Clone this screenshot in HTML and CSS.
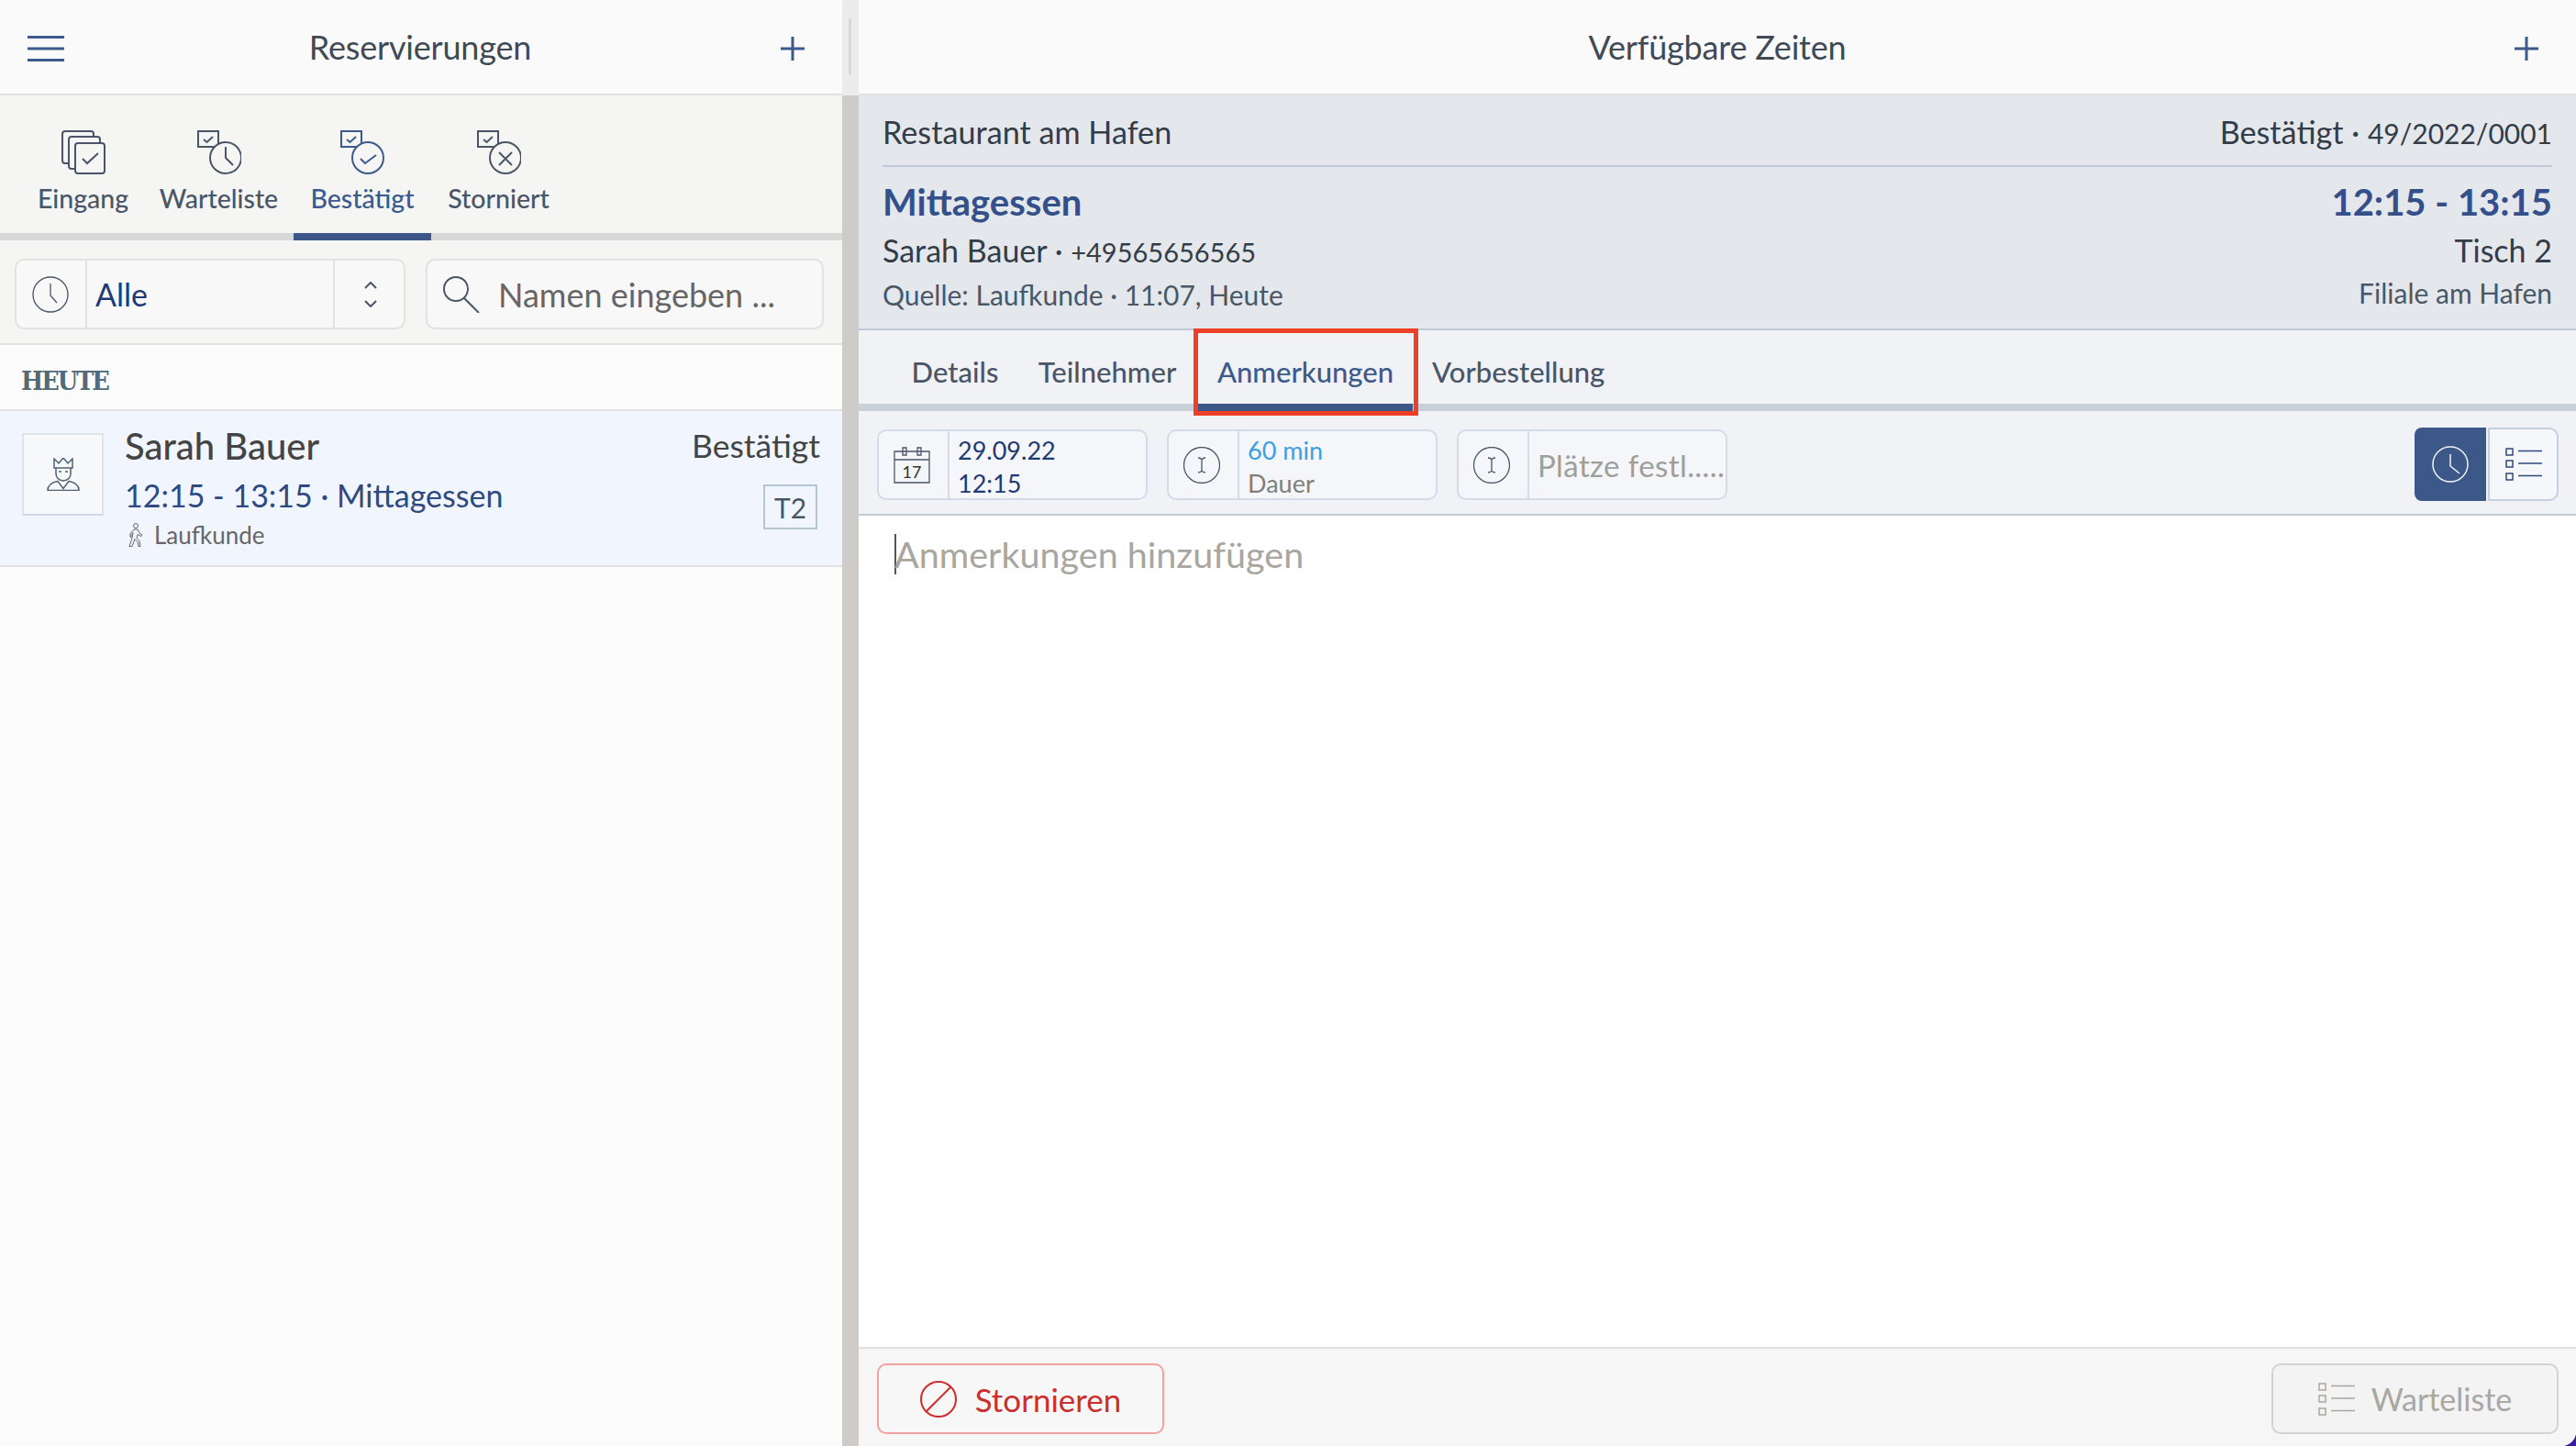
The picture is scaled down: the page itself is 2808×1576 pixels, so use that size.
FILE: index.html
```html
<!DOCTYPE html>
<html lang="de">
<head>
  <meta charset="UTF-8">
  <title>Reservierungen</title>
  <link rel="stylesheet" href="styles.css">
</head>
<body>
  <div class="app">
    <div class="left">
      <div class="topbar">
        <svg class="burger" viewBox="0 0 40 28" width="40" height="28"><path d="M0 1.5h40M0 14h40M0 26.500h40"/></svg>
        <span class="topbar-title title-left">Reservierungen</span>
        <svg class="plus" viewBox="0 0 26 26" width="26" height="26"><path d="M13 0v26M0 13h26"/></svg>
      </div>
      <div class="status-tabs">
        <div class="status-tab">
          <svg class="status-icon" viewBox="0 0 48 48" width="48" height="48">
            <rect x="1" y="1" width="34" height="35" rx="3"/>
            <rect x="8" y="7" width="34" height="35" rx="3"/>
            <rect x="15" y="14" width="32" height="33" rx="3"/>
            <path d="M23 31l5 5 12-11"/>
          </svg>
          <span>Eingang</span>
        </div>
        <div class="status-tab">
          <svg class="status-icon" viewBox="0 0 48 48" width="48" height="48">
            <rect x="1" y="1" width="22" height="17"/>
            <path d="M7 10l3.500 3 6.500-6"/>
            <circle cx="31" cy="30" r="17"/>
            <path d="M31 18v12l8 8"/>
          </svg>
          <span>Warteliste</span>
        </div>
        <div class="status-tab active">
          <svg class="status-icon" viewBox="0 0 48 48" width="48" height="48">
            <rect x="1" y="1" width="22" height="17"/>
            <path d="M7 10l3.500 3 6.500-6"/>
            <circle cx="30" cy="30" r="17"/>
            <path d="M22 31l5 5 12-9"/>
          </svg>
          <span>Bestätigt</span>
        </div>
        <div class="status-tab">
          <svg class="status-icon" viewBox="0 0 48 48" width="48" height="48">
            <rect x="1" y="1" width="22" height="17"/>
            <path d="M7 10l3.500 3 6.500-6"/>
            <circle cx="31" cy="30" r="17"/>
            <path d="M24 24l14 14M38 24l-14 14"/>
          </svg>
          <span>Storniert</span>
        </div>
      </div>
      <div class="filters">
        <div class="select-box">
          <div class="select-icon">
            <svg class="thin-icon" viewBox="0 0 40 40" width="40" height="40"><circle cx="20" cy="20" r="19"/><path d="M20 8v13l7 8"/></svg>
          </div>
          <div class="select-value">Alle</div>
          <div class="select-arrows">
            <svg class="line-icon" viewBox="0 0 14 28" width="14" height="28"><path d="M1 7l6-6 6 6M1 21l6 6 6-6"/></svg>
          </div>
        </div>
        <div class="search-box">
          <svg class="line-icon" viewBox="0 0 40 40" width="40" height="40"><circle cx="14" cy="14" r="13"/><path d="M23 24l16 16"/></svg>
          <span>Namen eingeben ...</span>
        </div>
      </div>
      <div class="list">
        <div class="list-heading">HEUTE</div>
        <div class="res-row">
          <div class="avatar">
            <svg class="avatar-icon" viewBox="0 0 36 36" width="36" height="36">
              <path d="M8 11V1l5 5 5-6 5 6 5-5v10z"/>
              <path d="M10 11v6q0 7 8 8 8-1 8-8v-6"/>
              <path d="M13 15h3M20 15h3"/>
              <path d="M1 35.500q0-8 11-10l6 8 6-8q11 2 11 10z"/>
            </svg>
          </div>
          <div class="res-main">
            <div class="res-name">Sarah Bauer</div>
            <div class="res-time">12:15 - 13:15 · Mittagessen</div>
            <div class="res-source">
              <svg class="walker" viewBox="0 0 17 26" width="17" height="26">
                <circle cx="9" cy="3" r="2.500"/>
                <path d="M7 7h4l2 4 3 2-1 1.500-4-2-1 4 3 3 1 6h-2l-1-5-3-3-3 8H2l3-9 1-6-2 2v3H3v-4z"/>
              </svg>
              <span>Laufkunde</span>
            </div>
          </div>
          <div class="res-side">
            <div class="res-status">Bestätigt</div>
            <div class="table-badge">T2</div>
          </div>
        </div>
      </div>
    </div>

    <div class="splitter"><div class="splitter-top"><i></i></div></div>

    <div class="right">
      <div class="topbar">
        <span class="topbar-spacer"></span>
        <span class="topbar-title">Verfügbare Zeiten</span>
        <svg class="plus" viewBox="0 0 26 26" width="26" height="26"><path d="M13 0v26M0 13h26"/></svg>
      </div>
      <div class="info">
        <div class="info-top">
          <span>Restaurant am Hafen</span>
          <span>Bestätigt · <small>49/2022/0001</small></span>
        </div>
        <div class="info-rows">
          <div class="info-col">
            <div class="info-big">Mittagessen</div>
            <div class="info-mid">Sarah Bauer · <small>+49565656565</small></div>
            <div class="info-small">Quelle: Laufkunde · 11:07, Heute</div>
          </div>
          <div class="info-col info-col-right">
            <div class="info-big">12:15 - 13:15</div>
            <div class="info-mid">Tisch 2</div>
            <div class="info-small">Filiale am Hafen</div>
          </div>
        </div>
      </div>
      <div class="detail-tabs">
        <div class="detail-tab">Details</div>
        <div class="detail-tab">Teilnehmer</div>
        <div class="detail-tab active">Anmerkungen<div class="highlight"></div></div>
        <div class="detail-tab tab-order">Vorbestellung</div>
      </div>
      <div class="toolbar">
        <div class="field">
          <div class="field-icon">
            <svg class="thin-icon" viewBox="0 0 40 40" width="40" height="40">
              <path d="M1 5h38v34H1zM1 14h38M10 1h4v8h-4zM26 1h4v8h-4z"/>
              <text x="20" y="34" text-anchor="middle" class="cal-day">17</text>
            </svg>
          </div>
          <div class="field-text"><div class="dark-blue">29.09.22</div><div class="dark-blue">12:15</div></div>
        </div>
        <div class="field">
          <div class="field-icon">
            <svg class="thin-icon" viewBox="0 0 40 40" width="40" height="40"><circle cx="20" cy="20" r="19.500"/><path d="M16 12q3 0 4 2 1-2 4-2M20 14v12M16 28q3 0 4-2 1 2 4 2"/></svg>
          </div>
          <div class="field-text"><div class="sky">60 min</div><div class="muted">Dauer</div></div>
        </div>
        <div class="field">
          <div class="field-icon">
            <svg class="thin-icon" viewBox="0 0 40 40" width="40" height="40"><circle cx="20" cy="20" r="19.500"/><path d="M16 12q3 0 4 2 1-2 4-2M20 14v12M16 28q3 0 4-2 1 2 4 2"/></svg>
          </div>
          <div class="field-placeholder">Plätze festl.....</div>
        </div>
        <div class="view-switch">
          <div class="view-btn view-on">
            <svg class="white-icon" viewBox="0 0 40 40" width="40" height="40"><circle cx="20" cy="20" r="19"/><path d="M20 9v13l10 8"/></svg>
          </div>
          <div class="view-btn view-off">
            <svg class="list-icon" viewBox="0 0 40 36" width="40" height="36"><path d="M1 1h7v7H1zM1 14h7v7H1zM1 28h7v7H1zM14 3.500h26M14 17h26M14 30.500h26"/></svg>
          </div>
        </div>
      </div>
      <div class="notes"><span class="caret"></span><span class="notes-hint">Anmerkungen hinzufügen</span></div>
      <div class="footer">
        <button class="btn btn-cancel">
          <svg class="cancel-icon" viewBox="0 0 40 40" width="40" height="40"><circle cx="20" cy="20" r="19"/><path d="M7 33L33 7"/></svg>
          Stornieren
        </button>
        <button class="btn btn-wait">
          <svg class="list-icon grey" viewBox="0 0 40 36" width="40" height="36"><path d="M1 1h7v7H1zM1 14h7v7H1zM1 28h7v7H1zM14 3.500h26M14 17h26M14 30.500h26"/></svg>
          Warteliste
        </button>
      </div>
    </div>
  </div>
</body>
</html>
```
FILE: styles.css
```css
* {
  box-sizing: border-box;
}
html, body {
  margin: 0;
  height: 100%;
}
body {
  background-color: #3a1c9c;
  font-family: Lato, "Noto Sans", sans-serif;
  color: #333;
}
.app {
  display: flex;
  width: 2808px;
  height: 1576px;
  border-bottom-right-radius: 16px;
  overflow: hidden;
  background-color: #fbfbfb;
}
.left {
  width: 918px;
  display: flex;
  flex-direction: column;
  background-color: #fbfbfb;
}
.splitter {
  width: 18px;
  background-color: #cdccc9;
}
.splitter-top {
  height: 104px;
  background-color: #ececec;
  padding: 20px 0 0 7px;
}
.splitter-top i {
  display: block;
  width: 3px;
  height: 62px;
  background-color: #d8d8d8;
}
.right {
  flex: 1;
  display: flex;
  flex-direction: column;
  background-color: #fff;
}

/* top bars */
.topbar {
  height: 104px;
  flex: none;
  display: flex;
  align-items: center;
  justify-content: space-between;
  padding: 4px 41px 0 30px;
  background-color: #fafafa;
  border-bottom: 2px solid #e2e2e2;
}
.topbar-title {
  font-size: 36px;
  letter-spacing: -0.2px;
  margin-top: -4px;
  color: #3f4a56;
}
.title-left {
  margin-right: 5px;
}
.topbar-spacer {
  width: 37px;
}
.burger, .plus {
  fill: none;
  stroke: #3c5a8c;
  stroke-width: 3;
}

/* status tabs */
.status-tabs {
  height: 158px;
  flex: none;
  display: grid;
  grid-template-columns: 133px 163px 150px 147px;
  padding-left: 24px;
  background-color: #f5f5f3;
  border-bottom: 8px solid #d8d8d8;
}
.status-tab {
  display: flex;
  flex-direction: column;
  align-items: center;
  padding-top: 38px;
  height: 158px;
  font-size: 28.500px;
  font-weight: 500;
  color: #4a5668;
}
.status-tab span {
  margin-top: 6px;
  line-height: 40px;
}
.status-tab.active {
  color: #3c5a8c;
  border-bottom: 8px solid #3c5688;
}
.status-icon {
  fill: #f5f5f3;
  stroke: #4a5668;
  stroke-width: 2;
}
.active .status-icon {
  stroke: #3c5a8c;
}

/* filters */
.filters {
  height: 114px;
  flex: none;
  display: flex;
  gap: 22px;
  padding: 20px 20px 0 16px;
  background-color: #f5f5f3;
  border-bottom: 2px solid #e2e2e2;
}
.select-box, .search-box {
  height: 77px;
  display: flex;
  align-items: center;
  background-color: #f8f8f8;
  border: 2px solid #e2e2e2;
  border-radius: 10px;
}
.select-box {
  width: 426px;
}
.search-box {
  width: 434px;
  padding-left: 17px;
  gap: 20px;
  font-size: 36px;
  color: #666;
}
.select-icon {
  width: 77px;
  height: 100%;
  padding-right: 2px;
  display: flex;
  align-items: center;
  justify-content: center;
  border-right: 2px solid #e2e2e2;
}
.select-value {
  width: 270px;
  height: 100%;
  display: flex;
  align-items: center;
  padding-left: 9px;
  font-size: 34px;
  color: #1f3a75;
  border-right: 2px solid #e2e2e2;
}
.select-arrows {
  flex: 1;
  display: flex;
  justify-content: center;
  padding-left: 2px;
}
.line-icon {
  fill: none;
  stroke: #4a5668;
  stroke-width: 2;
}
.thin-icon {
  fill: none;
  stroke: #4a5668;
  stroke-width: 1.300;
}
.cal-day {
  font-size: 18px;
  fill: #333;
  stroke: none;
}

/* list */
.list-heading {
  height: 72px;
  display: flex;
  align-items: center;
  padding: 7px 0 0 23px;
  font-family: "DejaVu Serif Condensed", "DejaVu Serif", serif;
  font-weight: bold;
  font-size: 28.500px;
  letter-spacing: -2px;
  color: #4f6a7a;
  border-bottom: 2px solid #e2e2e2;
}
.res-row {
  height: 170px;
  display: flex;
  padding: 24px 27px 0 24px;
  background-color: #f1f6fe;
  border-bottom: 2px solid #e2e2e2;
}
.avatar {
  width: 89px;
  height: 90px;
  display: flex;
  align-items: center;
  justify-content: center;
  background-color: #f7f8fa;
  border: 2px solid #dfe4ea;
  border-bottom-color: #cfd8e4;
}
.avatar-icon {
  fill: none;
  stroke: #4f6274;
  stroke-width: 1.500;
}
.res-main {
  flex: 1;
  padding-left: 23px;
}
.res-name {
  font-size: 40px;
  font-weight: 500;
  line-height: 44px;
  margin-top: -8px;
  color: #444;
}
.res-time {
  font-size: 34px;
  line-height: 44px;
  margin-top: 10px;
  color: #2e4a80;
}
.res-source {
  display: flex;
  align-items: center;
  gap: 12px;
  margin-top: 6px;
  padding-left: 3px;
  font-size: 26px;
  line-height: 30px;
  color: #666;
}
.walker {
  fill: none;
  stroke: #666;
  stroke-width: 1;
}
.res-side {
  display: flex;
  flex-direction: column;
  align-items: flex-end;
}
.res-status {
  font-size: 35.500px;
  line-height: 44px;
  margin: -8px -3px 0 0;
  color: #444;
}
.table-badge {
  width: 59px;
  height: 49px;
  margin-top: 20px;
  display: flex;
  align-items: center;
  justify-content: center;
  font-size: 30px;
  color: #4a5668;
  border: 2px solid #b4c6d6;
}

/* reservation info */
.info {
  height: 256px;
  flex: none;
  padding: 0 26px 0 26px;
  background-color: #e4e7ec;
  border-bottom: 2px solid #bcc8d8;
}
.info-top {
  height: 78px;
  display: flex;
  justify-content: space-between;
  align-items: center;
  padding-top: 2px;
  font-size: 34.200px;
  color: #333d47;
  border-bottom: 2px solid #c0c8d8;
}
.info small {
  font-size: 30px;
}
.info-rows {
  display: flex;
  justify-content: space-between;
}
.info-col-right {
  text-align: right;
}
.info-big {
  font-size: 40px;
  font-weight: 700;
  line-height: 56px;
  margin-top: 10px;
  color: #34508a;
}
.info-mid {
  font-size: 34px;
  line-height: 46px;
  margin-top: 2px;
  color: #333d47;
}
.info-mid small {
  font-size: 29px;
}
.info-small {
  font-size: 30px;
  line-height: 46px;
  color: #4a5866;
}

/* detail tabs */
.detail-tabs {
  height: 88px;
  flex: none;
  position: relative;
  padding-left: 38px;
  background-color: #f0f2f6;
  border-bottom: 8px solid #c8d0da;
  display: grid;
  grid-template-columns: 134px 198px 234px auto;
  font-size: 31px;
  font-weight: 500;
  color: #4a5668;
}
.detail-tab {
  height: 88px;
  padding-top: 23px;
  line-height: 44px;
  text-align: center;
  position: relative;
}
.tab-order {
  text-align: left;
  padding-left: 21px;
}
.detail-tab.active {
  color: #3c5a8c;
  border-bottom: 8px solid #3c5688;
}
.highlight {
  position: absolute;
  top: -2px;
  left: -5px;
  right: -6px;
  bottom: -13px;
  border: 5px solid #ee4026;
}

/* toolbar */
.toolbar {
  height: 114px;
  flex: none;
  display: flex;
  gap: 21px;
  padding: 20px 19px 0 20px;
  background-color: #f0f2f6;
  border-bottom: 2px solid #c0ccd8;
}
.field {
  width: 295px;
  height: 77px;
  display: flex;
  background-color: #f4f6f9;
  border: 2px solid #d4dbe6;
  border-radius: 10px;
}
.field-icon {
  width: 77px;
  flex: none;
  padding-right: 4px;
  display: flex;
  align-items: center;
  justify-content: center;
  border-right: 2px solid #d4dbe6;
}
.field-text {
  padding: 3px 0 0 9px;
  font-size: 27px;
  line-height: 36px;
}
.dark-blue {
  color: #1f3a75;
}
.sky {
  color: #3d9fe0;
}
.muted {
  color: #80807a;
}
.field-placeholder {
  display: flex;
  align-items: center;
  padding-left: 9px;
  font-size: 33px;
  letter-spacing: 0.4px;
  white-space: nowrap;
  color: #a09e98;
}
.view-switch {
  margin-left: auto;
  display: flex;
  gap: 2px;
  height: 80px;
  margin-top: -2px;
}
.view-btn {
  width: 78px;
  display: flex;
  align-items: center;
  justify-content: center;
}
.view-on {
  background-color: #3c5888;
  border-radius: 8px 0 0 8px;
}
.view-off {
  width: 77px;
  background-color: #f6f7fa;
  border: 2px solid #c4d0de;
  border-radius: 0 10px 10px 0;
}
.white-icon {
  fill: none;
  stroke: #f0f4f8;
  stroke-width: 1.500;
}
.list-icon {
  fill: none;
  stroke: #2e4a80;
  stroke-width: 1.500;
}
.list-icon.grey {
  stroke: #aaa6a2;
}

/* notes */
.notes {
  flex: 1;
  display: flex;
  align-items: flex-start;
  padding: 20px 0 0 39px;
  background-color: #fff;
}
.caret {
  width: 2px;
  height: 44px;
  margin-right: -2px;
  background-color: #555;
}
.notes-hint {
  font-size: 39.500px;
  line-height: 44px;
  color: #a8a69e;
}

/* footer */
.footer {
  height: 108px;
  flex: none;
  display: flex;
  justify-content: space-between;
  padding: 16px 19px 0 20px;
  background-color: #f6f6f6;
  border-top: 2px solid #e0e0e0;
}
.btn {
  width: 313px;
  height: 77px;
  display: flex;
  align-items: center;
  justify-content: center;
  gap: 20px;
  font-family: inherit;
  font-size: 35px;
  border-radius: 10px;
  border: 2px solid #f5a0a0;
  padding: 0;
}
.btn-cancel {
  background-color: #f7f7f7;
  color: #cc2e2e;
}
.btn-wait {
  background-color: #f3f3f3;
  color: #aaa6a2;
  border-color: #d4d2d0;
  font-size: 34px;
  gap: 18px;
}
.cancel-icon {
  fill: none;
  stroke: #cc2e2e;
  stroke-width: 2;
}
```
